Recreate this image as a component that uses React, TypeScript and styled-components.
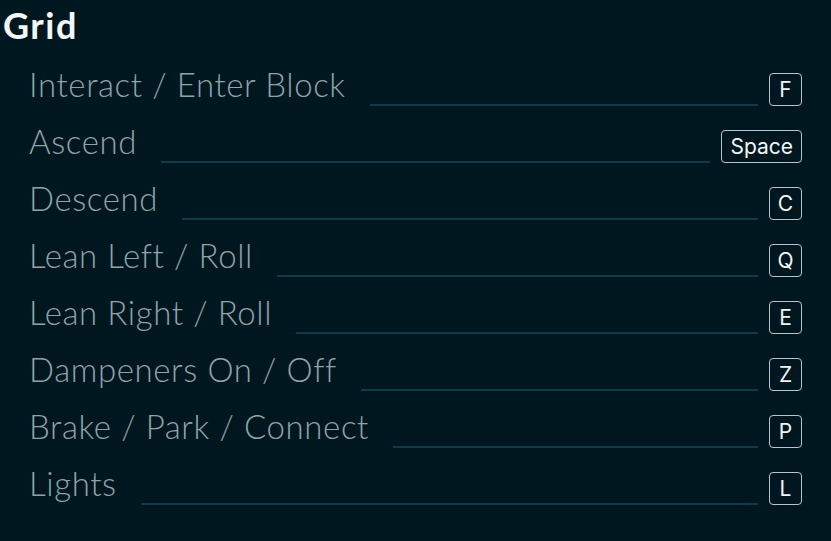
import styled, { createGlobalStyle } from 'styled-components';

const GlobalStyle = createGlobalStyle`
  html, body {
    margin: 0;
    padding: 0;
    background: #011720;
  }
  * {
    box-sizing: border-box;
  }
`;

const Page = styled.div`
  width: 831px;
  height: 541px;
  background: #011720;
  font-family: Lato, 'Noto Sans', sans-serif;
  overflow: hidden;
`;

const Title = styled.h1`
  margin: 0;
  height: 57px;
  padding: 5px 0 0 3px;
  font-size: 36px;
  font-weight: 700;
  line-height: 40px;
  color: #f4f7f8;
  letter-spacing: 1.5px;
`;

const List = styled.div`
  display: flex;
  flex-direction: column;
  padding: 0 29px 0 29px;
`;

const Row = styled.div`
  display: flex;
  align-items: flex-end;
  height: 57px;
  padding-bottom: 8px;
`;

const Label = styled.span`
  align-self: center;
  margin: 5px 24px 0 0;
  font-size: 33px;
  font-weight: 300;
  line-height: 40px;
  letter-spacing: 0.6px;
  color: #8ea4ab;
  white-space: nowrap;
`;

const Leader = styled.div`
  flex: 1;
  height: 2px;
  margin-right: 11px;
  background: #0d3b48;
`;

const Key = styled.kbd<{ $wide?: boolean }>`
  display: flex;
  align-items: center;
  justify-content: center;
  min-width: 33px;
  height: 33px;
  padding: ${p => (p.$wide ? '0 8px' : '0')};
  border: 1px solid #b7c4c8;
  border-radius: 4px;
  font-family: Inter, 'Noto Sans', sans-serif;
  font-size: 21px;
  font-weight: 400;
  color: #f2f5f6;
`;

const bindings = [
  { label: 'Interact / Enter Block', key: 'F' },
  { label: 'Ascend', key: 'Space' },
  { label: 'Descend', key: 'C' },
  { label: 'Lean Left / Roll', key: 'Q' },
  { label: 'Lean Right / Roll', key: 'E' },
  { label: 'Dampeners On / Off', key: 'Z' },
  { label: 'Brake / Park / Connect', key: 'P' },
  { label: 'Lights', key: 'L' },
];

const App = () => {
  return (
    <>
      <GlobalStyle />
      <Page>
        <Title>Grid</Title>
        <List>
          {bindings.map(b => (
            <Row key={b.label}>
              <Label>{b.label}</Label>
              <Leader />
              <Key $wide={b.key.length > 1}>{b.key}</Key>
            </Row>
          ))}
        </List>
      </Page>
    </>
  );
};

export default App;
